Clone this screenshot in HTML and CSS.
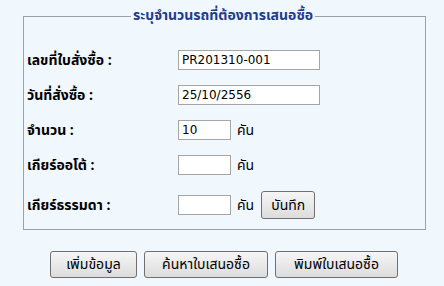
FILE: index.html
```html
<!DOCTYPE html>
<html lang="th">
<head>
  <meta charset="UTF-8" />
  <title>เสนอซื้อ</title>
  <link rel="stylesheet" href="styles.css">
</head>
<body>

<fieldset class="box">
  <legend>ระบุจำนวนรถที่ต้องการเสนอซื้อ</legend>
  <div class="row">
    <label>เลขที่ใบสั่งซื้อ :</label>
    <input type="text" class="wide" value="PR201310-001">
  </div>
  <div class="row">
    <label>วันที่สั่งซื้อ :</label>
    <input type="text" class="wide" value="25/10/2556">
  </div>
  <div class="row">
    <label>จำนวน :</label>
    <input type="text" class="short" value="10"> <span class="unit">คัน</span>
  </div>
  <div class="row">
    <label>เกียร์ออโต้ :</label>
    <input type="text" class="short"> <span class="unit">คัน</span>
  </div>
  <div class="row last">
    <label>เกียร์ธรรมดา :</label>
    <input type="text" class="short"> <span class="unit">คัน</span>
    <button class="btn save">บันทึก</button>
  </div>
</fieldset>

<div class="actions">
  <button class="btn">เพิ่มข้อมูล</button>
  <button class="btn">ค้นหาใบเสนอซื้อ</button>
  <button class="btn">พิมพ์ใบเสนอซื้อ</button>
</div>

</body>
</html>
```

FILE: styles.css
```css
body { font-family: Tahoma, "Noto Sans Thai", "DejaVu Sans", sans-serif; font-size: 14px; background: #f0f7fd; margin: 0; color: #000; }
.box { margin: 6px 0 0 23px; width: 403px; box-sizing: border-box; border: 1px solid #a0a0a0; padding: 9px 3px 10px 3px; }
.box legend { color: #1e3c8c; font-weight: bold; font-size: 14px; line-height: 20px; margin-left: 104px; padding: 0 2px; }
.row { display: flex; align-items: center; height: 20px; margin-top: 15px; }
.row.last { height: 28px; margin-top: 16px; }
.row label { width: 151px; font-weight: bold; }
input { font-family: "DejaVu Sans", sans-serif; font-size: 12px; height: 20px; box-sizing: border-box; border: 1px solid #a5a5a5; background: white; padding: 0 3px; margin: 0; }
.wide { width: 142px; }
.short { width: 53px; }
.unit { margin-left: 6px; }
.btn { font-family: inherit; font-size: 14px; height: 27px; border: 1px solid #707070; border-radius: 3px; background: linear-gradient(#f6f6f6, #dcdcdc); padding: 0 8px; color: #000; }
.save { margin-left: 7px; height: 28px; width: 54px; }
.actions { display: flex; gap: 7px; margin: 21px 0 0 50px; }
.actions .btn:first-child { width: 87px; }
.actions .btn:nth-child(2) { width: 124px; }
.actions .btn:nth-child(3) { width: 123px; }
```
